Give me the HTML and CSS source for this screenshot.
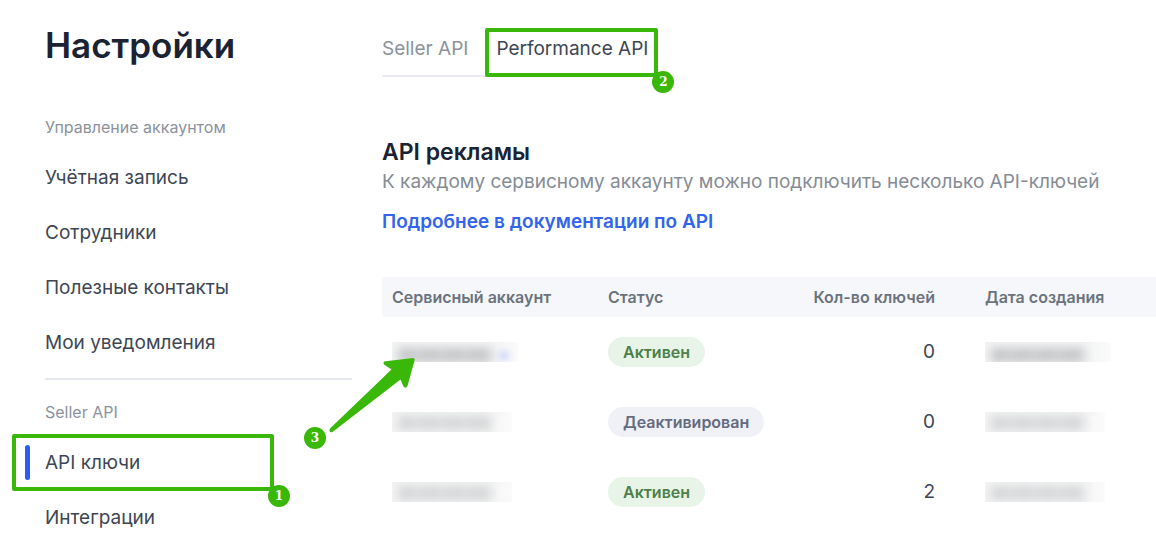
FILE: index.html
```html
<!DOCTYPE html>
<html lang="ru">
<head>
<meta charset="UTF-8">
<meta name="viewport" content="width=device-width, initial-scale=1.0">
<title>Настройки</title>
<link rel="stylesheet" href="styles.css">
</head>
<body>
<div class="page">
  <aside class="sidebar">
    <h1>Настройки</h1>
    <nav>
      <p class="nav-label">Управление аккаунтом</p>
      <ul class="nav-list">
        <li><a href="#account">Учётная запись</a></li>
        <li><a href="#staff">Сотрудники</a></li>
        <li><a href="#contacts">Полезные контакты</a></li>
        <li><a href="#notifications">Мои уведомления</a></li>
      </ul>
      <hr class="divider">
      <p class="nav-label">Seller API</p>
      <ul class="nav-list">
        <li class="active">
          <a href="#keys">API ключи</a>
          <span class="mark mark-nav"><b class="step step-corner">1</b></span>
        </li>
        <li><a href="#integrations">Интеграции</a></li>
      </ul>
    </nav>
  </aside>

  <main class="content">
    <div class="tabs" role="tablist">
      <button class="tab" type="button" role="tab">Seller API</button>
      <div class="tab-wrap">
        <button class="tab tab-active" type="button" role="tab" aria-selected="true">Performance API</button>
        <span class="mark mark-tab"><b class="step step-corner">2</b></span>
      </div>
    </div>

    <h2>API рекламы</h2>
    <p class="lead">К каждому сервисному аккаунту можно подключить несколько API-ключей</p>
    <a class="docs" href="#docs">Подробнее в документации по API</a>

    <table class="accounts">
      <thead>
        <tr>
          <th class="col-name">Сервисный аккаунт</th>
          <th class="col-status">Статус</th>
          <th class="col-count">Кол-во ключей</th>
          <th>Дата создания</th>
        </tr>
      </thead>
      <tbody>
        <tr>
          <td class="pointed">
            <span class="smudge smudge-link"></span>
            <svg class="arrow" width="90" height="78" viewBox="0 0 90 78" aria-hidden="true">
              <path d="M1.500 73Q1 71.500 2.500 70L63.500 11.500L56 6.500Q54.500 3.500 57.500 3.200L85 0Q87 0 86.500 2.500L79.500 28Q77.500 31 75.500 28.500L72.500 21.500L4.500 74Q2.500 75 1.500 73Z" fill="#39b809"/>
            </svg>
            <b class="step step-arrow">3</b>
          </td>
          <td><span class="status status-on">Активен</span></td>
          <td class="col-count">0</td>
          <td><span class="smudge smudge-dark"></span></td>
        </tr>
        <tr>
          <td><span class="smudge"></span></td>
          <td><span class="status">Деактивирован</span></td>
          <td class="col-count">0</td>
          <td><span class="smudge"></span></td>
        </tr>
        <tr>
          <td><span class="smudge"></span></td>
          <td><span class="status status-on">Активен</span></td>
          <td class="col-count">2</td>
          <td><span class="smudge"></span></td>
        </tr>
      </tbody>
    </table>
  </main>
</div>
</body>
</html>
```

FILE: styles.css
```css
* {box-sizing:border-box;}
body {
  margin:0;
  background:#fff;
  color:#3c4654;
  font-family:Inter, "Liberation Sans", sans-serif;
  font-size:19px;
  line-height:26px;
}
h1, h2, p, ul {margin:0; padding:0;}
a {color:inherit; text-decoration:none;}
.page {display:flex; gap:30px; padding-left:45px;}

/* sidebar */
.sidebar {flex:0 0 307px; padding-top:23px;}
h1 {margin-bottom:50px; font-size:35px; line-height:44px; font-weight:600; color:#1a2234;}
.nav-label {font-size:16px; line-height:20px; color:#8b929c;}
.nav-list {display:flex; flex-direction:column; gap:29px; margin-top:28px; list-style:none;}
.nav-list li {position:relative;}
.nav-list a {display:block;}
.divider {height:2px; margin:22px 0; border:0; background:#e6e8ef;}
.active::before {
  content:"";
  position:absolute;
  left:-20px;
  top:-5px;
  bottom:-4px;
  width:5px;
  border-radius:3px;
  background:#2b5df5;
}

/* step marks */
.mark {position:absolute; border:4px solid #39b809; border-radius:2px; pointer-events:none;}
.mark-nav {left:-33px; top:-16px; width:262px; height:57px;}
.mark-tab {left:-11px; right:-10px; top:-8px; bottom:-2px;}
.step {
  position:absolute;
  width:22px;
  height:22px;
  border-radius:50%;
  background:#39b809;
  color:#fff;
  font:bold 12px/22px "DejaVu Serif", serif;
  text-align:center;
}
.step-corner {right:-20px; bottom:-20px;}

/* content */
.content {flex:1; min-width:0; padding-top:36px;}
.tabs {display:inline-flex; gap:28px; border-bottom:2px solid #e9ebf0;}
.tab-wrap {position:relative;}
.tab {padding:0 0 13px; border:0; background:none; font:inherit; color:#8b929c; cursor:pointer;}
.tab-active {color:#3c4654;}
h2 {margin-top:58px; font-size:23px; line-height:34px; font-weight:600; color:#1a2234;}
.lead {color:#858c96;}
.docs {display:inline-block; margin:14px 0 42px; font-weight:600; color:#3264ed;}

.accounts {width:100%; table-layout:fixed; border-collapse:collapse;}
.accounts th {
  height:40px;
  padding:0 10px;
  background:#f5f7fb;
  font-size:16px;
  font-weight:600;
  text-align:left;
  color:#6b737e;
}
.accounts td {height:70px; padding:0 10px;}
.accounts .col-name {width:216px;}
.accounts .col-status {width:177px;}
.accounts .col-count {width:170px; text-align:right;}
.accounts th:last-child, .accounts td:last-child {padding-left:40px;}
.pointed {position:relative;}
.arrow {position:absolute; left:-54px; top:41px;}
.step-arrow {left:-78px; top:110px;}

.status {
  display:inline-block;
  padding:0 15px;
  border-radius:15px;
  background:#f0f1f6;
  color:#646b7f;
  font-size:16px;
  line-height:30px;
  font-weight:600;
}
.status-on {background:#e8f4e8; color:#4c8048;}

/* hidden values */
.smudge {
  display:block;
  position:relative;
  overflow:hidden;
  width:120px;
  height:20px;
  background:linear-gradient(90deg, #f3f4f4 80%, #fbfbfb);
}
.smudge::before {
  content:"";
  position:absolute;
  left:6px;
  top:4px;
  width:94px;
  height:14px;
  background:repeating-linear-gradient(90deg, #d5d6d8 0 16px, #dcddde 16px 24px);
  filter:blur(5px);
}
.smudge-link, .smudge-dark {width:126px;}
.smudge-link::before, .smudge-dark::before {
  top:6px;
  background:repeating-linear-gradient(90deg, #c4c6c8 0 16px, #cdcecf 16px 24px);
}
.smudge-link::after {
  content:"";
  position:absolute;
  right:9px;
  top:9px;
  width:10px;
  height:9px;
  background:#d3d8fb;
  filter:blur(3px);
}
```
